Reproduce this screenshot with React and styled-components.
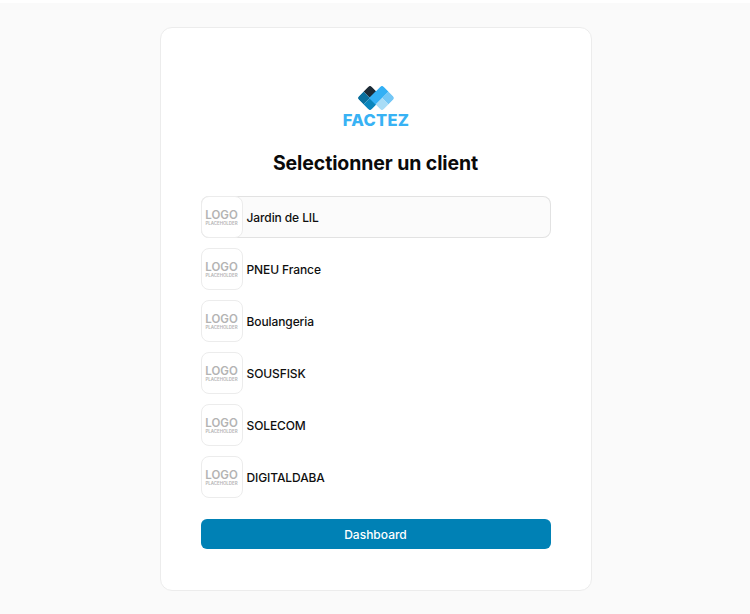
import React from "react";
import styled, { createGlobalStyle } from "styled-components";

const GlobalStyle = createGlobalStyle`
  html, body {
    margin: 0;
    padding: 0;
    background: #ffffff;
  }
  body {
    font-family: Inter, "Liberation Sans", sans-serif;
  }
`;

const Page = styled.div`
  box-sizing: border-box;
  width: 750px;
  height: 611px;
  margin-top: 3px;
  padding-top: 24px;
  display: flex;
  justify-content: center;
  align-items: flex-start;
  background: #fafafa;
`;

const Card = styled.main`
  box-sizing: border-box;
  width: 432px;
  height: 564px;
  margin-left: 1px;
  padding: 58px 40px 0;
  display: flex;
  flex-direction: column;
  align-items: center;
  background: #ffffff;
  border: 1px solid #ececec;
  border-radius: 12px;
`;

const Brand = styled.div`
  padding-left: 1px;
  display: flex;
  flex-direction: column;
  align-items: center;
`;

const BrandName = styled.span`
  margin-top: 2px;
  font-size: 16.5px;
  line-height: 17px;
  font-weight: 800;
  letter-spacing: 0.3px;
  color: #38b2f4;
`;

const Title = styled.h1`
  margin: 19px 0 18px;
  font-size: 19.5px;
  line-height: 30px;
  font-weight: 700;
  letter-spacing: -0.1px;
  color: #0a0a0a;
`;

const ClientList = styled.ul`
  width: 100%;
  margin: 0;
  padding: 0;
  list-style: none;
  display: flex;
  flex-direction: column;
  gap: 10px;
`;

const ClientRow = styled.li`
  box-sizing: border-box;
  height: 42px;
  display: flex;
  align-items: center;
  gap: 4px;
  border-radius: 8px;
  background: ${(p) => (p.$active ? "#fbfbfb" : "transparent")};
  box-shadow: ${(p) => (p.$active ? "inset 0 0 0 1px #e2e2e2" : "none")};
`;

const LogoBox = styled.div`
  box-sizing: border-box;
  width: 42px;
  height: 42px;
  flex: none;
  padding-top: 2px;
  display: flex;
  flex-direction: column;
  align-items: center;
  justify-content: center;
  background: #ffffff;
  border: 1px solid #ececec;
  border-radius: 8px;
  color: #b3b3b3;
`;

const LogoWord = styled.span`
  font-size: 11.5px;
  line-height: 11px;
  font-weight: 600;
`;

const LogoSub = styled.span`
  font-size: 4.4px;
  line-height: 5px;
  font-weight: 600;
`;

const ClientName = styled.span`
  padding-top: 1px;
  font-size: 12px;
  line-height: 18px;
  font-weight: 450;
  letter-spacing: -0.1px;
  color: #0f0f0f;
`;

const DashboardButton = styled.button`
  width: 100%;
  height: 30px;
  margin-top: 21px;
  border: none;
  border-radius: 6px;
  background: #0081b5;
  color: #ffffff;
  font-family: inherit;
  font-size: 12px;
  font-weight: 500;
  cursor: pointer;
`;

const FactezMark = () => (
  <svg width="36" height="24" viewBox="0 0 36 24" aria-hidden="true">
    <defs>
      <clipPath id="mark-clip">
        <rect x="2.8" y="2.8" width="18.4" height="18.4" rx="3" transform="rotate(45 12 12)" />
        <rect x="14.8" y="2.8" width="18.4" height="18.4" rx="3" transform="rotate(45 24 12)" />
      </clipPath>
    </defs>
    <g clipPath="url(#mark-clip)">
      <path d="M12 -1 L18.5 5.5 L12 12 L5.5 5.5 Z" fill="#1d2b36" />
      <path d="M5.5 5.5 L12 12 L5.5 18.5 L-1 12 Z" fill="#0a6f9d" />
      <path d="M12 12 L18.5 18.5 L12 25 L5.5 18.5 Z" fill="#0a86bd" />
      <path d="M30.5 5.5 L37 12 L30.5 18.5 L24 12 Z" fill="#74c7f6" />
      <path d="M24 12 L30.5 18.5 L24 25 L17.5 18.5 Z" fill="#a8dcf6" />
      <path d="M24 -1 L30.5 5.5 L17.5 18.5 L11 12 Z" fill="#33b0f5" />
    </g>
  </svg>
);

const clients = ["Jardin de LIL", "PNEU France", "Boulangeria", "SOUSFISK", "SOLECOM", "DIGITALDABA"];

const App = () => {
  return (
    <>
      <GlobalStyle />
      <Page>
        <Card>
          <Brand>
            <FactezMark />
            <BrandName>FACTEZ</BrandName>
          </Brand>
          <Title>Selectionner un client</Title>
          <ClientList>
            {clients.map((name, i) => (
              <ClientRow key={name} $active={i === 0}>
                <LogoBox>
                  <LogoWord>LOGO</LogoWord>
                  <LogoSub>PLACEHOLDER</LogoSub>
                </LogoBox>
                <ClientName>{name}</ClientName>
              </ClientRow>
            ))}
          </ClientList>
          <DashboardButton>Dashboard</DashboardButton>
        </Card>
      </Page>
    </>
  );
};

export default App;
